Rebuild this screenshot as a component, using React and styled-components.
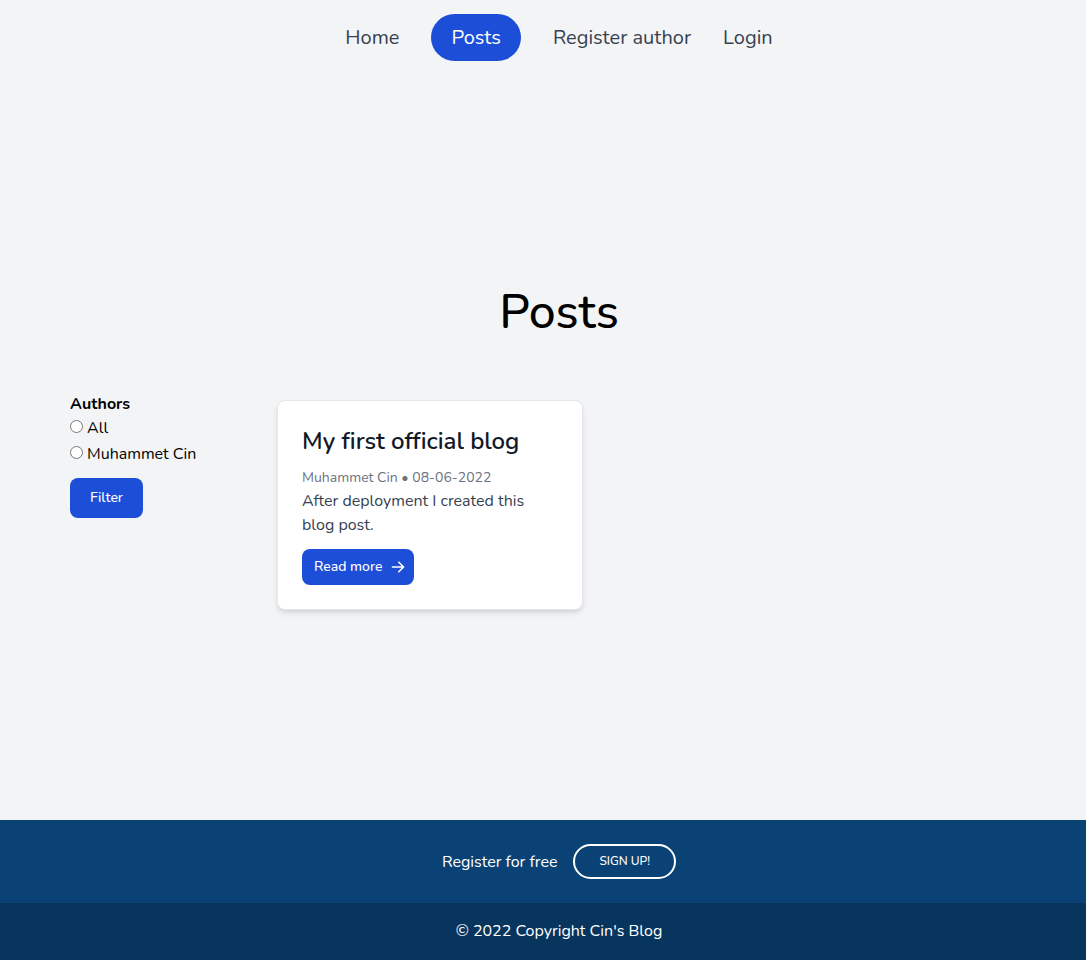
import React from "react";
import styled, { createGlobalStyle } from "styled-components";

const GlobalStyle = createGlobalStyle`
  *, *::before, *::after { box-sizing: border-box; }
  body {
    margin: 0;
    background: #f3f4f6;
    color: #000;
    font-family: Nunito, Lato, "Open Sans", sans-serif;
    font-size: 16px;
    line-height: 24px;
  }
  h1, h2, p, ul { margin: 0; padding: 0; }
  button { font-family: inherit; cursor: pointer; }
  a { text-decoration: none; color: inherit; }
`;

const Page = styled.div`
  min-height: 100vh;
  display: flex;
  flex-direction: column;
`;

const Nav = styled.nav`
  padding: 14px 0 0 32px;
  display: flex;
  justify-content: center;
`;

const NavList = styled.ul`
  display: flex;
  align-items: center;
  gap: 32px;
  list-style: none;
`;

const NavLink = styled.a`
  display: block;
  padding: ${(p) => (p.$active ? "0 20px" : "0")};
  border-radius: 24px;
  background: ${(p) => (p.$active ? "#1d4ed8" : "transparent")};
  color: ${(p) => (p.$active ? "#fff" : "#374151")};
  font-size: 20px;
  line-height: 47px;
`;

const Main = styled.main`
  flex: 1;
  padding: 227px 38px 0 70px;
`;

const Title = styled.h1`
  font-size: 48px;
  line-height: 48px;
  font-weight: 500;
  text-align: center;
`;

const Columns = styled.div`
  display: flex;
  align-items: flex-start;
  gap: 32px;
  padding-top: 56px;
`;

const Filters = styled.form`
  width: 175px;
  flex: none;
`;

const Group = styled.fieldset`
  margin: 0 0 12px;
  padding: 0;
  border: 0;
`;

const Legend = styled.legend`
  padding: 0;
  font-weight: 700;
`;

const Option = styled.label`
  display: flex;
  align-items: flex-start;
  gap: 4px;
  line-height: 24px;
  & + & { margin-top: 2px; }
`;

const Radio = styled.input`
  width: 13px;
  height: 13px;
  margin: 4px 0 0;
`;

const FilterButton = styled.button`
  padding: 0 20px;
  border: 0;
  border-radius: 8px;
  background: #1d4ed8;
  color: #fff;
  font-size: 14px;
  line-height: 40px;
  font-weight: 500;
`;

const Card = styled.article`
  flex: 0 1 306px;
  margin-top: 8px;
  padding: 24px;
  background: #fff;
  border: 1px solid #e5e7eb;
  border-radius: 8px;
  box-shadow: 0 4px 6px -1px rgba(0, 0, 0, 0.1), 0 2px 4px -2px rgba(0, 0, 0, 0.1);
`;

const CardTitle = styled.h2`
  margin-bottom: 10px;
  color: #111827;
  font-size: 24px;
  line-height: 32px;
  font-weight: 600;
  font-variant-ligatures: none;
`;

const Meta = styled.p`
  color: #6b7280;
  font-size: 14px;
  line-height: 22px;
`;

const Excerpt = styled.p`
  margin-bottom: 12px;
  color: #374151;
`;

const ReadMore = styled.a`
  display: inline-flex;
  align-items: center;
  gap: 8px;
  padding: 0 8px 0 12px;
  border-radius: 8px;
  background: #1d4ed8;
  color: #fff;
  font-size: 14px;
  line-height: 36px;
  font-weight: 500;
  vertical-align: top;
`;

const Arrow = () => (
  <svg width="16" height="16" viewBox="0 0 20 20" fill="currentColor" aria-hidden="true">
    <path
      fillRule="evenodd"
      clipRule="evenodd"
      d="M10.293 3.293a1 1 0 011.414 0l6 6a1 1 0 010 1.414l-6 6a1 1 0 01-1.414-1.414L14.586 11H3a1 1 0 110-2h11.586l-4.293-4.293a1 1 0 010-1.414z"
    />
  </svg>
);

const Footer = styled.footer`
  background: #0a4275;
  color: #fff;
`;

const SignUpRow = styled.div`
  display: flex;
  justify-content: center;
  align-items: center;
  gap: 16px;
  padding: 24px 0 24px 32px;
`;

const SignUp = styled.button`
  padding: 0 24px;
  border: 2px solid #fff;
  border-radius: 18px;
  background: transparent;
  color: #fff;
  font-size: 12px;
  line-height: 31px;
  font-weight: 500;
`;

const Copyright = styled.p`
  padding: 16px 0 17px 32px;
  background: #08355e;
  text-align: center;
`;

const links = ["Home", "Posts", "Register author", "Login"];
const authors = ["All", "Muhammet Cin"];

export default function App() {
  return (
    <Page>
      <GlobalStyle />
      <Nav>
        <NavList>
          {links.map((name) => (
            <li key={name}>
              <NavLink href="#" $active={name === "Posts"}>{name}</NavLink>
            </li>
          ))}
        </NavList>
      </Nav>
      <Main>
        <Title>Posts</Title>
        <Columns>
          <Filters onSubmit={(e) => e.preventDefault()}>
            <Group>
              <Legend>Authors</Legend>
              {authors.map((name) => (
                <Option key={name}>
                  <Radio type="radio" name="author" value={name} />
                  {name}
                </Option>
              ))}
            </Group>
            <FilterButton type="submit">Filter</FilterButton>
          </Filters>
          <Card>
            <CardTitle>My first official blog</CardTitle>
            <Meta>Muhammet Cin • 08-06-2022</Meta>
            <Excerpt>After deployment I created this blog post.</Excerpt>
            <ReadMore href="#">
              Read more
              <Arrow />
            </ReadMore>
          </Card>
        </Columns>
      </Main>
      <Footer>
        <SignUpRow>
          <span>Register for free</span>
          <SignUp type="button">SIGN UP!</SignUp>
        </SignUpRow>
        <Copyright>© 2022 Copyright Cin's Blog</Copyright>
      </Footer>
    </Page>
  );
}
